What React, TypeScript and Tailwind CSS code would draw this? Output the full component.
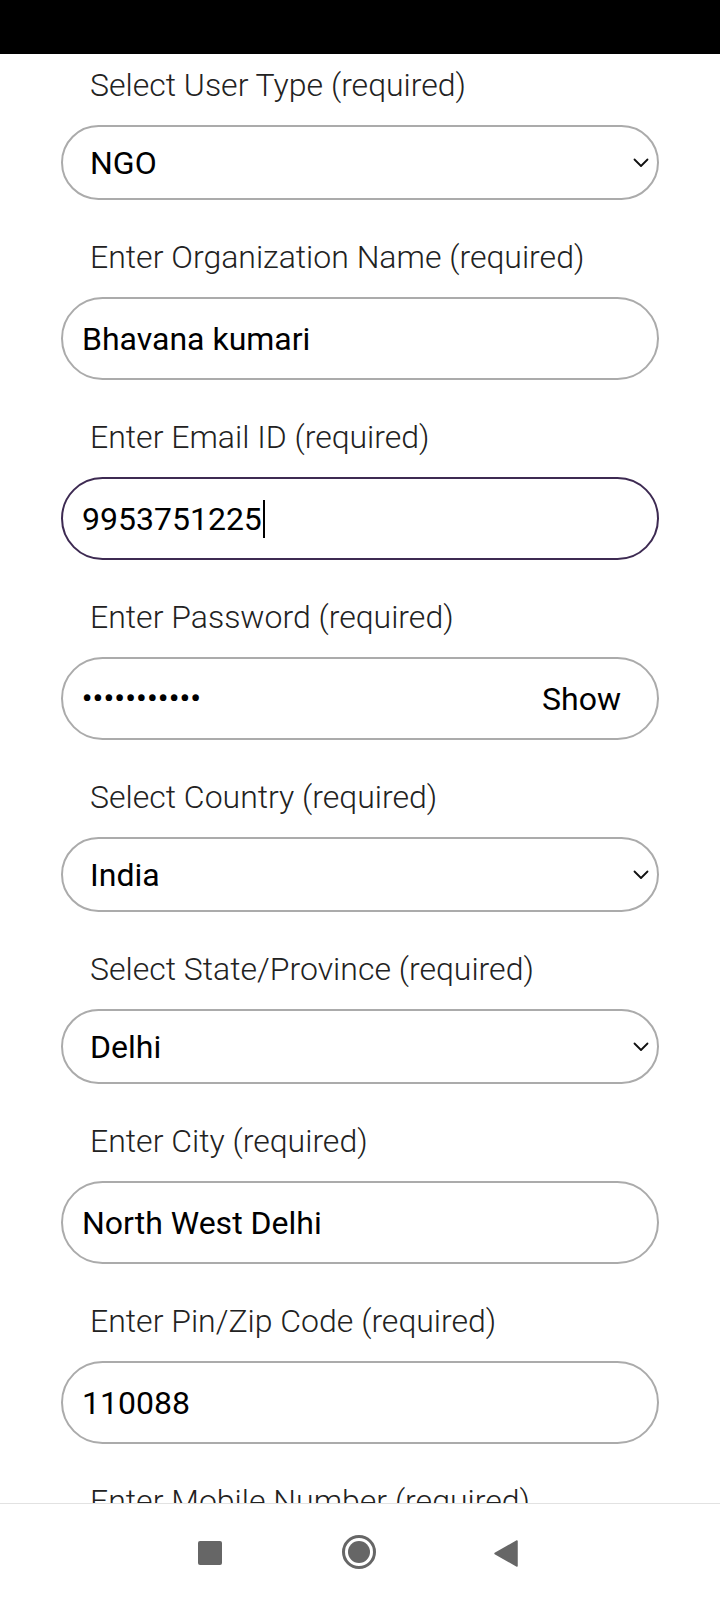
import React from "react";

type Field = {
  label: string;
  kind: "select" | "input" | "password";
  value: string;
  focused?: boolean;
};

const fields: Field[] = [
  { label: "Select User Type (required)", kind: "select", value: "NGO" },
  { label: "Enter Organization Name (required)", kind: "input", value: "Bhavana kumari" },
  { label: "Enter Email ID (required)", kind: "input", value: "9953751225", focused: true },
  { label: "Enter Password (required)", kind: "password", value: "•••••••••••" },
  { label: "Select Country (required)", kind: "select", value: "India" },
  { label: "Select State/Province (required)", kind: "select", value: "Delhi" },
  { label: "Enter City (required)", kind: "input", value: "North West Delhi" },
  { label: "Enter Pin/Zip Code (required)", kind: "input", value: "110088" },
  { label: "Enter Mobile Number (required)", kind: "input", value: "" },
];

function Chevron() {
  return (
    <svg width="16" height="10" viewBox="0 0 16 10" fill="none">
      <path d="M1.5 1.5 L8 8 L14.5 1.5" stroke="#111" strokeWidth="1.8" strokeLinecap="round" strokeLinejoin="round" />
    </svg>
  );
}

function FormField({ field }: { field: Field }) {
  const base = "rounded-full border-2 bg-white flex items-center text-[32px] text-black";
  return (
    <div className="mb-[37px]">
      <div className="h-[40px] leading-[40px] pl-[29px] mb-[20px] text-[32px] font-light text-[#222] whitespace-nowrap">
        {field.label}
      </div>
      {field.kind === "select" && (
        <div className={`${base} h-[75px] border-[#ababab] pl-[27px] pr-[8px] justify-between`}>
          <span>{field.value}</span>
          <Chevron />
        </div>
      )}
      {field.kind === "input" && (
        <div
          className={`${base} h-[83px] pl-[19px] ${
            field.focused ? "border-[#3d2a52]" : "border-[#ababab]"
          }`}
        >
          <span>{field.value}</span>
          {field.focused && <span className="w-[2px] h-[38px] bg-black ml-[1px]" />}
        </div>
      )}
      {field.kind === "password" && (
        <div className={`${base} h-[83px] border-[#ababab] pl-[19px] pr-[36px] justify-between`}>
          <span className="text-[28px] font-bold tracking-[0.8px]">{field.value}</span>
          <span>Show</span>
        </div>
      )}
    </div>
  );
}

export default function App() {
  return (
    <div className="h-[1600px] w-[720px] flex flex-col bg-white overflow-hidden font-['Roboto',sans-serif]">
      <div className="h-[54px] bg-black shrink-0" />
      <div className="flex-1 overflow-hidden px-[61px] pt-[11px]">
        {fields.map((f) => (
          <FormField key={f.label} field={f} />
        ))}
      </div>
      <div className="h-[97px] shrink-0 border-t border-[#e2e2e2] bg-white relative">
        <div className="absolute left-[198px] top-[37px] w-[24px] h-[24px] rounded-[2px] bg-[#666]" />
        <div className="absolute left-[342px] top-[31px] w-[34px] h-[34px] rounded-full border-[3px] border-[#666] flex items-center justify-center">
          <div className="w-[22px] h-[22px] rounded-full bg-[#666]" />
        </div>
        <svg className="absolute left-[493px] top-[36px]" width="25" height="27" viewBox="0 0 25 27">
          <path d="M24 1 L24 26 L2 13.5 Z" fill="#666" stroke="#666" strokeWidth="1.5" strokeLinejoin="round" />
        </svg>
      </div>
    </div>
  );
}
